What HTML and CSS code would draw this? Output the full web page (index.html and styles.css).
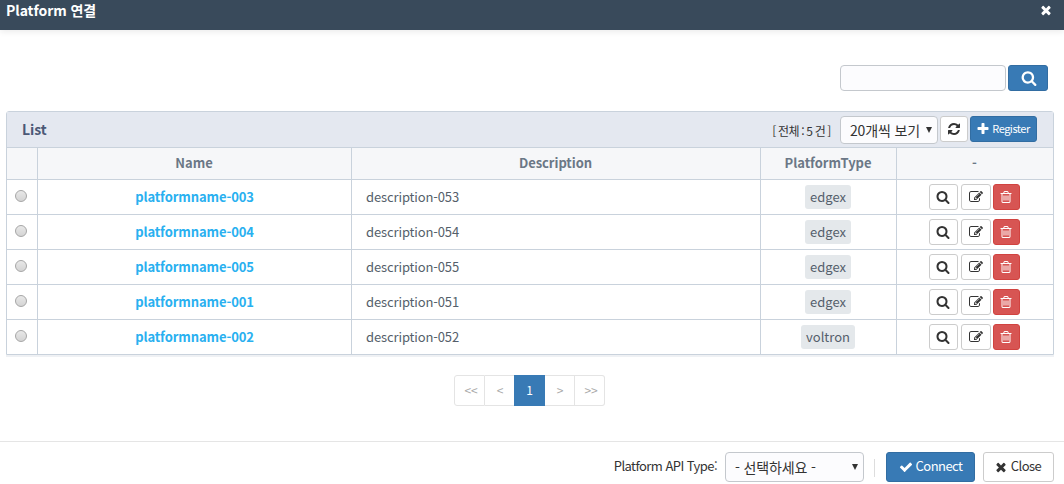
FILE: index.html
```html
<!DOCTYPE html>
<html lang="ko">
<head>
<meta charset="utf-8">
<title>Platform 연결</title>
<link rel="stylesheet" href="styles.css">
</head>
<body>
<svg class="sprite" aria-hidden="true">
  <symbol id="search" viewBox="0 0 1792 1792"><path d="M1216 832q0-185-131.500-316.500t-316.500-131.500-316.500 131.500-131.500 316.500 131.500 316.500 316.500 131.500 316.500-131.500 131.500-316.500zm512 832q0 52-38 90t-90 38q-54 0-90-38l-343-342q-179 124-399 124-143 0-273.500-55.500t-225-150-150-225-55.500-273.500 55.500-273.500 150-225 225-150 273.500-55.500 273.500 55.500 225 150 150 225 55.500 273.500q0 220-124 399l343 343q37 37 37 90z"/></symbol>
  <symbol id="refresh" viewBox="0 0 1792 1792"><path d="M1639 1056q0 5-1 7-64 268-268 434.500t-478 166.500q-146 0-282.500-55t-243.500-157l-129 129q-19 19-45 19t-45-19-19-45v-448q0-26 19-45t45-19h448q26 0 45 19t19 45-19 45l-137 137q71 66 161 102t187 36q134 0 250-65t186-179q11-17 53-117 8-23 30-23h192q13 0 22.500 9.500t9.500 22.500zm25-800v448q0 26-19 45t-45 19h-448q-26 0-45-19t-19-45 19-45l138-138q-148-137-349-137-134 0-250 65t-186 179q-11 17-53 117-8 23-30 23h-199q-13 0-22.500-9.500t-9.500-22.500v-7q65-268 270-434.500t480-166.500q146 0 284 55.500t245 156.500l130-129q19-19 45-19t45 19 19 45z"/></symbol>
  <symbol id="plus" viewBox="0 0 1792 1792"><path d="M1600 736v192q0 40-28 68t-68 28h-416v416q0 40-28 68t-68 28h-192q-40 0-68-28t-28-68v-416h-416q-40 0-68-28t-28-68v-192q0-40 28-68t68-28h416v-416q0-40 28-68t68-28h192q40 0 68 28t28 68v416h416q40 0 68 28t28 68z"/></symbol>
  <symbol id="check" viewBox="0 0 1792 1792"><path d="M1671 566q0 40-28 68l-724 724-136 136q-28 28-68 28t-68-28l-136-136-362-362q-28-28-28-68t28-68l136-136q28-28 68-28t68 28l294 295 656-657q28-28 68-28t68 28l136 136q28 28 28 68z"/></symbol>
  <symbol id="times" viewBox="0 0 1792 1792"><path d="M1490 1322q0 40-28 68l-136 136q-28 28-68 28t-68-28l-294-294-294 294q-28 28-68 28t-68-28l-136-136q-28-28-28-68t28-68l294-294-294-294q-28-28-28-68t28-68l136-136q28-28 68-28t68 28l294 294 294-294q28-28 68-28t68 28l136 136q28 28 28 68t-28 68l-294 294 294 294q28 28 28 68z"/></symbol>
  <symbol id="edit" viewBox="0 0 1792 1792"><path d="M888 1184l116-116-152-152-116 116v56h96v96h56zm440-720q-16-16-33 1l-350 350q-17 17-1 33t33-1l350-350q17-17 1-33zm80 594v190q0 119-84.500 203.500t-203.500 84.500h-832q-119 0-203.500-84.500t-84.500-203.500v-832q0-119 84.500-203.500t203.500-84.500h832q63 0 117 25 15 7 18 23 3 17-9 29l-49 49q-14 14-32 8-23-6-45-6h-832q-66 0-113 47t-47 113v832q0 66 47 113t113 47h832q66 0 113-47t47-113v-126q0-13 9-22l64-64q15-15 35-7t20 29zm-96-738l288 288-672 672h-288v-288zm444 132l-92 92-288-288 92-92q28-28 68-28t68 28l152 152q28 28 28 68t-28 68z"/></symbol>
  <symbol id="trash" viewBox="0 0 1792 1792"><path d="M704 736v576q0 14-9 23t-23 9h-64q-14 0-23-9t-9-23v-576q0-14 9-23t23-9h64q14 0 23 9t9 23zm256 0v576q0 14-9 23t-23 9h-64q-14 0-23-9t-9-23v-576q0-14 9-23t23-9h64q14 0 23 9t9 23zm256 0v576q0 14-9 23t-23 9h-64q-14 0-23-9t-9-23v-576q0-14 9-23t23-9h64q14 0 23 9t9 23zm128 724v-948h-896v948q0 22 7 40.500t14.500 27 10.500 8.500h832q3 0 10.500-8.500t14.500-27 7-40.500zm-672-1076h448l-48-117q-7-9-17-11h-317q-10 2-17 11zm928 32v64q0 14-9 23t-23 9h-96v948q0 83-47 143.500t-113 60.500h-832q-66 0-113-58.500t-47-141.500v-952h-96q-14 0-23-9t-9-23v-64q0-14 9-23t23-9h309l70-167q15-37 54-63t79-26h320q40 0 79 26t54 63l70 167h309q14 0 23 9t9 23z"/></symbol>
</svg>

<header class="titlebar">
  <h1 class="title">Platform 연결</h1>
  <svg class="icon title-close"><use href="#times"/></svg>
</header>

<main class="content">
  <div class="search">
    <input class="search-input" type="text" aria-label="search">
    <button class="btn primary search-btn"><svg class="icon"><use href="#search"/></svg></button>
  </div>

  <section class="panel">
    <div class="panel-head">
      <h2 class="panel-title">List</h2>
      <span class="total">[ 전체 : 5 건 ]</span>
      <div class="select page-size"><span>20개씩 보기</span><i class="arrow"></i></div>
      <button class="btn refresh"><svg class="icon"><use href="#refresh"/></svg></button>
      <button class="btn primary register"><svg class="icon"><use href="#plus"/></svg><span>Register</span></button>
    </div>
    <div class="row head"><div class="cell"></div><div class="cell">Name</div><div class="cell">Description</div><div class="cell">PlatformType</div><div class="cell">-</div></div>
    <div class="row">
      <div class="cell"><i class="radio"></i></div><div class="cell name">platformname-003</div><div class="cell desc">description-053</div><div class="cell"><span class="tag">edgex</span></div>
      <div class="cell actions"><button class="btn view"><svg class="icon"><use href="#search"/></svg></button><button class="btn edit"><svg class="icon"><use href="#edit"/></svg></button><button class="btn danger"><svg class="icon"><use href="#trash"/></svg></button></div>
    </div>
    <div class="row">
      <div class="cell"><i class="radio"></i></div><div class="cell name">platformname-004</div><div class="cell desc">description-054</div><div class="cell"><span class="tag">edgex</span></div>
      <div class="cell actions"><button class="btn view"><svg class="icon"><use href="#search"/></svg></button><button class="btn edit"><svg class="icon"><use href="#edit"/></svg></button><button class="btn danger"><svg class="icon"><use href="#trash"/></svg></button></div>
    </div>
    <div class="row">
      <div class="cell"><i class="radio"></i></div><div class="cell name">platformname-005</div><div class="cell desc">description-055</div><div class="cell"><span class="tag">edgex</span></div>
      <div class="cell actions"><button class="btn view"><svg class="icon"><use href="#search"/></svg></button><button class="btn edit"><svg class="icon"><use href="#edit"/></svg></button><button class="btn danger"><svg class="icon"><use href="#trash"/></svg></button></div>
    </div>
    <div class="row">
      <div class="cell"><i class="radio"></i></div><div class="cell name">platformname-001</div><div class="cell desc">description-051</div><div class="cell"><span class="tag">edgex</span></div>
      <div class="cell actions"><button class="btn view"><svg class="icon"><use href="#search"/></svg></button><button class="btn edit"><svg class="icon"><use href="#edit"/></svg></button><button class="btn danger"><svg class="icon"><use href="#trash"/></svg></button></div>
    </div>
    <div class="row">
      <div class="cell"><i class="radio"></i></div><div class="cell name">platformname-002</div><div class="cell desc">description-052</div><div class="cell"><span class="tag">voltron</span></div>
      <div class="cell actions"><button class="btn view"><svg class="icon"><use href="#search"/></svg></button><button class="btn edit"><svg class="icon"><use href="#edit"/></svg></button><button class="btn danger"><svg class="icon"><use href="#trash"/></svg></button></div>
    </div>
  </section>

  <nav class="pager"><a class="page first">&lt;&lt;</a><a class="page prev">&lt;</a><a class="page current">1</a><a class="page">&gt;</a><a class="page last">&gt;&gt;</a></nav>
</main>

<footer class="footer">
  <span class="api-label">Platform API Type:</span>
  <div class="select api-type"><span>- 선택하세요 -</span><i class="arrow"></i></div>
  <i class="divider"></i>
  <button class="btn primary connect"><svg class="icon"><use href="#check"/></svg><span>Connect</span></button>
  <button class="btn close"><svg class="icon"><use href="#times"/></svg><span>Close</span></button>
</footer>
</body>
</html>
```
FILE: styles.css
```css
* { box-sizing: border-box; }
body {
  margin: 0;
  height: 484px;
  display: flex;
  flex-direction: column;
  overflow: hidden;
  background: #fff;
  color: #333;
  font: 13px/18px "Noto Sans CJK KR", sans-serif;
}
h1, h2 { margin: 0; }
.sprite { display: none; }
.icon { width: 14px; height: 14px; fill: currentColor; flex: none; }

.titlebar {
  height: 30px;
  flex: none;
  display: flex;
  justify-content: space-between;
  padding: 0 11px 0 6px;
  background: #394a5b;
  color: #fff;
  box-shadow: 0 2px 6px rgba(0, 0, 0, .08);
}
.title { font-size: 14px; line-height: 20px; font-weight: 700; letter-spacing: -.05px; }
.title-close { margin-top: 3px; }

.btn {
  display: flex;
  align-items: center;
  justify-content: center;
  padding: 0;
  border: 1px solid #ccc;
  border-radius: 3px;
  background: #fff;
  color: #333;
  font: inherit;
}
.primary { background: #387ab5; border-color: #326da2; color: #fff; }
.danger { background: #d75553; border-color: #d14340; color: #fff; }

.content { flex: 1; padding: 35px 10px 0 6px; }
.search { display: flex; justify-content: flex-end; gap: 2px; padding-right: 6px; }
.search-input {
  width: 166px;
  height: 26px;
  border: 1px solid #c4c8cd;
  border-radius: 4px;
  background: #fcfcfe;
}
.search-btn { width: 40px; height: 26px; padding-left: 1px; }
.search-btn .icon { width: 16px; height: 16px; }

.panel {
  margin-top: 20px;
  border: 1px solid #c9d2dc;
  border-radius: 3px 3px 0 0;
  box-shadow: 0 2px 0 #eff1f4;
}
.panel-head {
  height: 35px;
  display: flex;
  align-items: flex-start;
  padding: 4px 16px 0 15px;
  background: #e4e8f0;
}
.panel-title { margin: 3px auto 0 0; color: #4b5876; font-size: 14px; line-height: 20px; letter-spacing: -.1px; }
.total { margin: 6px 9px 0 0; font-size: 12px; letter-spacing: -.4px; word-spacing: -.9px; }
.select {
  display: flex;
  align-items: center;
  justify-content: space-between;
  border: 1px solid #c4c8cd;
  border-radius: 4px;
  background: #fcfcfe;
  font-size: 14px;
  letter-spacing: -.15px;
}
.arrow { border: 3px solid transparent; border-top: 6px solid #333; border-bottom: 0; }
.page-size { width: 98px; height: 28px; padding: 0 5px 0 9px; }
.refresh { width: 28px; height: 26px; margin: 0 2px; }
.register { width: 67px; height: 26px; padding-right: 1px; gap: 2px; font-size: 11px; letter-spacing: -.5px; }
.register span { margin-bottom: 2px; }

.row {
  display: grid;
  grid-template-columns: 30px 314px 409px 136px 157px;
  height: 35px;
  border-top: 1px solid #c9d2dc;
}
.cell {
  display: flex;
  align-items: center;
  justify-content: center;
  color: #555f6b;
}
.cell + .cell { border-left: 1px solid #c9d2dc; }
.head { height: 32px; background: #f6f7f9; }
.head .cell { color: #6b7786; font-weight: 700; padding: 0 1px 1px 0; letter-spacing: -.05px; }
.name.name { color: #29b0f0; font-weight: 700; letter-spacing: -.1px; }
.desc { justify-content: flex-start; padding-left: 14px; letter-spacing: -.12px; }
.tag { height: 24px; padding: 3px 5px; margin-right: 1px; border-radius: 3px; background: #e4e8eb; }
.radio {
  width: 12px;
  height: 12px;
  margin: 0 2px 2px 0;
  border: 1px solid #a6a6a6;
  border-radius: 50%;
  background: linear-gradient(#e8e8e8, #d4d4d4);
}
.actions { gap: 3px; padding-right: 2px; }
.view, .edit, .danger { height: 26px; }
.view { width: 29px; }
.edit { width: 30px; }
.danger { width: 27px; margin-left: -1px; }

.pager { display: flex; justify-content: center; margin-top: 20px; padding-right: 2px; }
.page {
  width: 30px;
  height: 31px;
  display: flex;
  align-items: center;
  justify-content: center;
  border: 1px solid #e4e4e4;
  border-left: 0;
  padding: 0 0 1px 2px;
  color: #aaa;
  font-size: 12px;
  letter-spacing: -.2px;
}
.first { width: 31px; padding-left: 4px; border-left: 1px solid #e4e4e4; border-radius: 3px 0 0 3px; }
.prev { width: 29px; border-right: 0; }
.last { padding-left: 4px; border-radius: 0 3px 3px 0; }
.current { width: 31px; border-color: #387ab5; background: #387ab5; color: #fff; }

.footer {
  height: 43px;
  flex: none;
  display: flex;
  align-items: flex-start;
  justify-content: flex-end;
  padding: 10px 10px 0 0;
  border-top: 1px solid #e5e5e5;
}
.api-label { margin: 5px 8px 0 0; letter-spacing: -.55px; }
.api-type { width: 139px; height: 30px; padding: 0 5px 0 9px; }
.api-type .arrow { margin-bottom: 1px; }
.divider { width: 1px; height: 18px; margin: 7px 11px 0 10px; background: #ddd; }
.connect, .close { height: 30px; gap: 3px; letter-spacing: -.55px; }
.connect { width: 89px; }
.close { width: 71px; margin-left: 8px; padding-right: 2px; }
.connect span, .close span { margin-bottom: 2px; }
```
